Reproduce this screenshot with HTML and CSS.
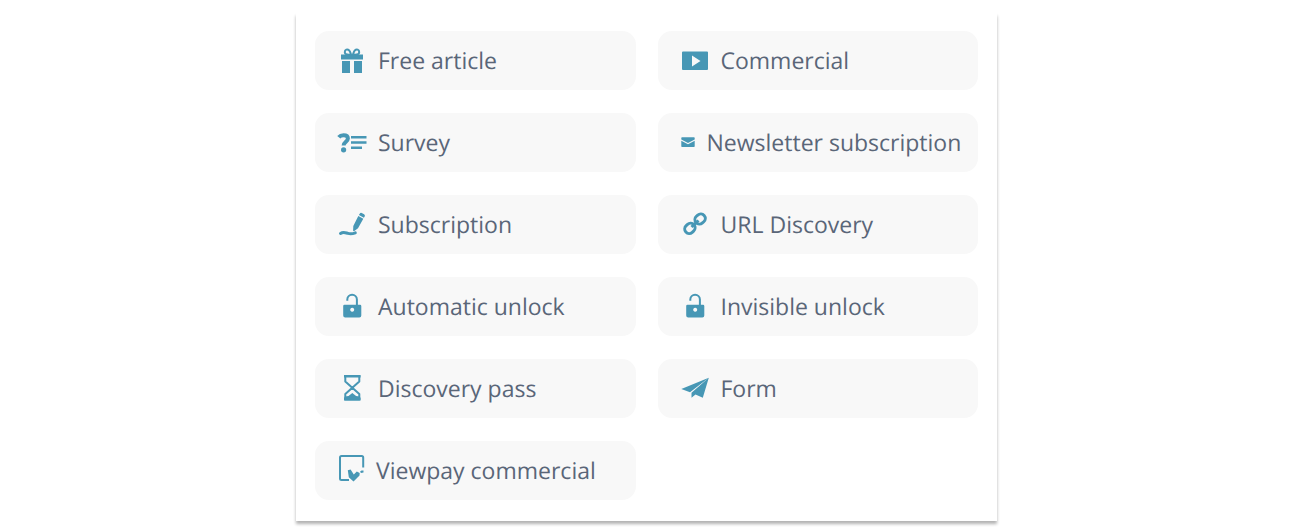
FILE: index.html
```
<!DOCTYPE html>
<html lang="en">
<head>
    <meta charset="UTF-8">
    <title>Actions</title>
    <link rel="stylesheet" href="styles.css">
</head>
<body>
    <div class="panel">
        <button type="button" class="option">
            <svg class="icon" viewBox="0 0 28 29">
                <path d="M3 8.500h22v5H3zM4 15h8v12H4zM16 15h8v12h-8z"/>
                <path class="line" d="M13 8.500C11 9 7 9 6.800 6.200 6.700 3.500 9.500 2.700 11 4.200 12.200 5.300 12.500 7 13 8.500zM15 8.500C17 9 21 9 21.200 6.200 21.300 3.500 18.500 2.700 17 4.200 15.800 5.300 15.500 7 15 8.500z"/>
            </svg>
            <span>Free article</span>
        </button>
        <button type="button" class="option">
            <svg class="icon" viewBox="0 0 28 29">
                <path fill-rule="evenodd" d="M2 5.500h24q1 0 1 1v16.500q0 1-1 1H2q-1 0-1-1V6.500q0-1 1-1zM11 9.500v11l8.500-5.500z"/>
            </svg>
            <span>Commercial</span>
        </button>

        <button type="button" class="option">
            <svg class="icon" viewBox="0 0 28 29">
                <path class="bold" d="M.8 9.300C2 7.800 3.800 7.300 5.500 7.300c2.800 0 4.400 1.200 4.400 3.200 0 3-4.300 3.400-4.300 7"/>
                <circle cx="5.600" cy="21.800" r="2.600"/>
                <path d="M13 8h15.500v2.500H13zM13 13.200h15.500v2.500H13zM13 18.400h11v2.500H13z"/>
            </svg>
            <span>Survey</span>
        </button>
        <button type="button" class="option">
            <svg class="icon icon-small" viewBox="0 0 14 29">
                <path d="M.3 11.500V10q0-.7.700-.7h12q.7 0 .7.700v1.500L7 15zM.3 12.700L7 16.200l6.700-3.500v5.500q0 .8-.7.800H1q-.7 0-.7-.8z"/>
            </svg>
            <span>Newsletter subscription</span>
        </button>

        <button type="button" class="option">
            <svg class="icon" viewBox="0 0 28 29">
                <path d="M21.700 3.800q.7-1.300 2-.8l2.400 1.200q1.200.8.700 2l-.9 1.500-5-2.600zM20.300 6.100l5 2.600-5.300 9.600-4 3-.9-.5.200-4.900z"/>
                <path class="thick" d="M2.500 23.400c3-2.100 5-.7 7.500 0 2.300.7 4.400.5 7.300-.6"/>
            </svg>
            <span>Subscription</span>
        </button>
        <button type="button" class="option">
            <svg class="icon" viewBox="0 0 28 29">
                <g class="link-ring">
                    <rect x="-5.400" y="-4.500" width="10.800" height="9" rx="4.500" transform="translate(19.100 9) rotate(-42)"/>
                    <rect x="-5.400" y="-4.500" width="10.800" height="9" rx="4.500" transform="translate(8.900 18.400) rotate(-42)"/>
                    <path d="M10.500 17l7-6.500"/>
                </g>
            </svg>
            <span>URL Discovery</span>
        </button>

        <button type="button" class="option">
            <svg class="icon" viewBox="0 0 28 29">
                <path fill-rule="evenodd" d="M6.500 12.800h15.500q1.300 0 1.300 1.300v9.500q0 2-2 2H7.200q-2 0-2-2v-9.500q0-1.300 1.300-1.300zM14.200 15.700a2 2 0 1 0 .01 0z"/>
                <path class="line" d="M9.300 8.800V7.500a4.800 4.800 0 0 1 9.600 0V13"/>
            </svg>
            <span>Automatic unlock</span>
        </button>
        <button type="button" class="option">
            <svg class="icon" viewBox="0 0 28 29">
                <path fill-rule="evenodd" d="M6.500 12.800h15.500q1.300 0 1.300 1.300v9.500q0 2-2 2H7.200q-2 0-2-2v-9.500q0-1.300 1.300-1.300zM14.200 15.700a2 2 0 1 0 .01 0z"/>
                <path class="line" d="M9.300 8.800V7.500a4.800 4.800 0 0 1 9.600 0V13"/>
            </svg>
            <span>Invisible unlock</span>
        </button>

        <button type="button" class="option">
            <svg class="icon" viewBox="0 0 28 29">
                <path class="line" stroke-linejoin="round" d="M7.300 2h14v5.500l-7 6.200-7-6.200zM7.300 25.500V20l7-6.300 7 6.300v5.500z"/>
                <path d="M6 1h16.600v2.500H6zM7 22.500l3.500-.5 3.800-3 3.800 3 3.500.5 1 1.500v2.500H6V24z"/>
            </svg>
            <span>Discovery pass</span>
        </button>
        <button type="button" class="option">
            <svg class="icon" viewBox="0 0 28 29">
                <path d="M27.800 3.700L.3 15l8.700 3.200zM27.800 3.700L10.500 18.800v5l4-3.300 7.300 3.200z"/>
            </svg>
            <span>Form</span>
        </button>

        <button type="button" class="option">
            <svg class="icon icon-medium" viewBox="0 0 26 29">
                <path class="line" d="M11 24H3.500Q2 24 2 22.500V1.500Q2 0 3.500 0H23.700Q25.200 0 25.200 1.500V11.500"/>
                <path d="M9.800 14.200l2.800-.6 3.200 5 3-3.200 2.900 1.700-.2 2.300-6 6-4.700-4.200z"/>
                <path d="M22 15.700l1.500-1.200h2v2l-2.500.5z"/>
            </svg>
            <span>Viewpay commercial</span>
        </button>
    </div>
</body>
</html>
```

FILE: styles.css
```
body {
    font-family: "Open Sans", sans-serif;
    margin: 0;
    padding: 13px 20px;
    background-color: #fff;
}
.panel {
    display: grid;
    grid-template-columns: 1fr 1fr;
    gap: 23px 22px;
    max-width: 701px;
    margin: 0 auto;
    padding: 18px 19px 21px;
    box-sizing: border-box;
    background-color: #fff;
    box-shadow: 0 3px 3px rgba(0, 0, 0, 0.3);
}
.option {
    display: flex;
    align-items: center;
    gap: 12px;
    padding: 15px 12px 15px 23px;
    border: none;
    border-radius: 14px;
    background-color: #f8f8f8;
    color: #5a6678;
    font-family: inherit;
    font-size: 23px;
    line-height: 29px;
    text-align: left;
    text-rendering: geometricPrecision;
    white-space: nowrap;
    cursor: pointer;
}
.option:hover {
    background-color: #f0f0f0;
}
.icon {
    flex: none;
    width: 28px;
    height: 29px;
    fill: #4797b5;
    overflow: visible;
}
.icon-small {
    width: 14px;
}
.icon-medium {
    width: 26px;
}
.line, .thick, .bold, .link-ring {
    fill: none;
    stroke: #4797b5;
    stroke-width: 2;
}
.thick {
    stroke-width: 3;
    stroke-linecap: round;
}
.bold {
    stroke-width: 4;
}
.link-ring {
    stroke-width: 3;
}
```
